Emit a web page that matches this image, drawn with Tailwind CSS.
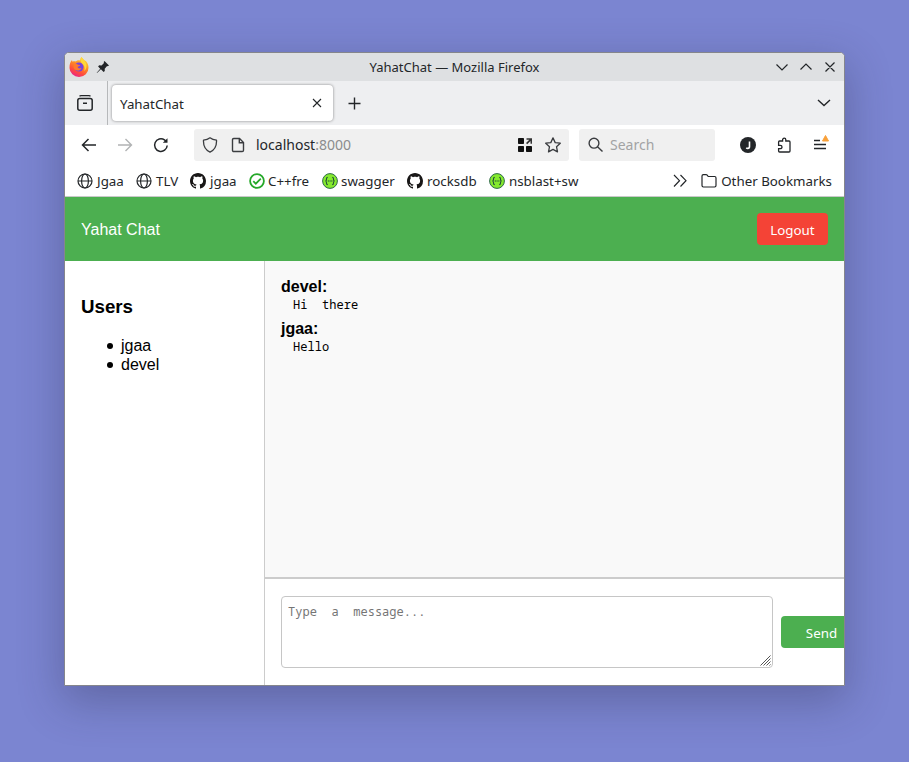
<!DOCTYPE html>
<html lang="en">
<head>
<meta charset="utf-8">
<title>YahatChat</title>
<script src="https://cdn.jsdelivr.net/npm/@tailwindcss/browser@4"></script>
</head>
<body class="w-[909px] h-[762px] overflow-hidden bg-[#7b85d1] pt-[52px] pl-[64px] font-['Noto_Sans',sans-serif] text-[#232629]">
<svg class="absolute w-0 h-0">
  <defs>
    <linearGradient id="fx" x1=".8" y1="0" x2=".3" y2="1"><stop offset="0" stop-color="#ffe83a"/><stop offset=".45" stop-color="#ff8a24"/><stop offset=".75" stop-color="#ff4a3f"/><stop offset="1" stop-color="#e8218d"/></linearGradient>
    <symbol id="globe" viewBox="0 0 16 16"><g fill="none" stroke="#232629" stroke-width="1.2"><circle cx="8" cy="8" r="7"/><ellipse cx="8" cy="8" rx="3.4" ry="7"/><path d="M1 8h14"/></g></symbol>
    <symbol id="github" viewBox="0 0 16 16"><path fill="#191717" d="M8 0C3.58 0 0 3.58 0 8c0 3.54 2.29 6.53 5.47 7.59.4.07.55-.17.55-.38 0-.19-.01-.82-.01-1.49-2.01.37-2.53-.49-2.69-.94-.09-.23-.48-.94-.82-1.13-.28-.15-.68-.52-.01-.53.63-.01 1.08.58 1.23.82.72 1.21 1.87.87 2.33.66.07-.52.28-.87.51-1.07-1.78-.2-3.64-.89-3.64-3.95 0-.87.31-1.59.82-2.15-.08-.2-.36-1.02.08-2.12 0 0 .67-.21 2.2.82.64-.18 1.32-.27 2-.27s1.36.09 2 .27c1.53-1.04 2.2-.82 2.2-.82.44 1.1.16 1.92.08 2.12.51.56.82 1.27.82 2.15 0 3.07-1.87 3.75-3.65 3.95.29.25.54.73.54 1.48 0 1.07-.01 1.93-.01 2.2 0 .21.15.46.55.38A8.01 8.01 0 0 0 16 8c0-4.42-3.58-8-8-8z"/></symbol>
    <symbol id="swagger" viewBox="0 0 16 16"><circle cx="8" cy="8" r="7.4" fill="#85ea2d" stroke="#2f6b4a"/><path d="M5.800 4.300c-1.300 0-1.300.5-1.300 1.700S4.300 8 3.400 8c.9 0 1.100.8 1.100 2s0 1.700 1.300 1.700M10.200 4.300c1.300 0 1.300.5 1.300 1.700s.2 2 1.100 2c-.9 0-1.100.8-1.100 2s0 1.700-1.300 1.700" fill="none" stroke="#1f4a3a" stroke-width="1.100"/><path d="M5.800 8h4.600" stroke="#1f4a3a" stroke-width="1.100" stroke-dasharray="1.200 .5"/></symbol>
  </defs>
</svg>
<div class="w-[781px] h-[634px] rounded-t-[5px] border border-[#85868c] bg-white overflow-hidden flex flex-col shadow-[0_14px_44px_2px_rgba(40,40,70,0.32)]">
  <!-- Title bar -->
  <header class="h-[28px] shrink-0 bg-[#dee0e2] flex items-center pl-[4px] pr-[8px]">
    <svg width="20" height="20" viewBox="0 0 20 20">
      <path d="M12.500 0c1 1.500 2.200 2.600 3.600 3.800.6-.1.900.2 1.200.7 1.500 1.800 2.300 4 2.200 6.300A9.500 9 0 0 1 .5 11C.4 7.500 1.300 4.500 3 2.900l.5 1.800c1.200-.5 2.300-.4 3.300-.2C8 3.300 9.500 3 11 3.400 11.200 2 11.700.8 12.500 0z" fill="url(#fx)"/>
      <circle cx="10" cy="10" r="4.500" fill="#7543e0"/>
      <path d="M5 7c1.500-.8 3-.2 4 .7l2.200.3c-.3 1.200-1.800 1.400-2.600 2 .3 1.600 2.400 1.900 4 .7-1 2.900-4.500 3.800-6.800 1.800C4.300 11.200 4.200 8.800 5 7z" fill="#ff7b2c"/>
      <path d="M12.500 0c1 2.300 4.700 4.500 5 8.500.2 2.300-.7 4.500-2.300 5.600 1-2.800.2-6-2-7.500C11.500 5.300 11 2 12.500 0z" fill="#ffd83a"/>
    </svg>
    <svg class="ml-[7px]" width="14" height="14" viewBox="0 0 14 14"><path d="M8.500 1 13 5.500l-1.200.8-.7-.2-2.400 2.700.1 2.200-1.200.9-2.700-2.700L1 13l-.3-.3L4.200 8.700 2.100 6.500 3.200 5.300l2.300.2L8 3.100l-.3-1z" fill="#232629"/></svg>
    <div class="flex-1 text-center text-[13px] leading-[28px] pl-[25px]">YahatChat — Mozilla Firefox</div>
    <svg width="62" height="14" viewBox="0 0 62 14" fill="none" stroke="#232629" stroke-width="1.200"><path d="M2.500 4.500 8 10l5.500-5.500M26.500 9.500 32 4l5.500 5.500M51.500 2.500l9 9M60.500 2.500l-9 9"/></svg>
  </header>
  <!-- Tab strip -->
  <div class="h-[44px] shrink-0 bg-[#eeeff1] flex items-center">
    <div class="w-[43px] h-full border-r border-[#b6b8ba] flex items-center pl-[12px]">
      <svg width="16" height="16" viewBox="0 0 16 16" fill="none" stroke="#232629" stroke-width="1.500"><path d="M2.500 1.200C3 .8 3.500.7 4 .7h8c.5 0 1 .1 1.500.5" stroke-width="1.300"/><rect x=".8" y="3.500" width="14.400" height="11.700" rx="2"/><path d="M6 8.300h4"/></svg>
    </div>
    <div class="ml-[4px] w-[221px] h-[36px] bg-white rounded-[4px] shadow-[0_0_3px_rgba(0,0,0,0.45)] flex items-center pl-[8px] pr-[11px] text-[13.333px]">
      <span class="flex-1 pt-[3px]">YahatChat</span>
      <svg width="10" height="10" viewBox="0 0 10 10" stroke="#232629" stroke-width="1.100"><path d="m1 1 8 8M9 1 1 9"/></svg>
    </div>
    <svg class="ml-[15px]" width="13" height="13" viewBox="0 0 13 13" stroke="#232629" stroke-width="1.400"><path d="M6.500.5v12M.5 6.500h12"/></svg>
    <svg class="ml-auto mr-[13px]" width="14" height="14" viewBox="0 0 14 14" fill="none" stroke="#232629" stroke-width="1.400"><path d="M1 4l6 5.500L13 4"/></svg>
  </div>
  <!-- Navigation toolbar -->
  <div class="h-[40px] shrink-0 flex items-center text-[14px]">
    <svg class="ml-[16px]" width="16" height="16" viewBox="0 0 16 16" fill="none" stroke="#232629" stroke-width="1.500"><path d="M15 8H1.500M7.500 2 1.500 8l6 6"/></svg>
    <svg class="ml-[20px]" width="16" height="16" viewBox="0 0 16 16" fill="none" stroke="#b1b3b4" stroke-width="1.400"><path d="M1 8h13.500M8.500 2l6 6-6 6"/></svg>
    <svg class="ml-[20px]" width="16" height="16" viewBox="0 0 16 16" fill="none" stroke="#232629" stroke-width="1.500"><path d="M14.200 8.500A6.300 6.300 0 1 1 11.500 2.900l1.800 1.600"/><path d="M14.500 1.200v4.600H9.800z" fill="#232629" stroke="none"/></svg>
    <div class="ml-[25px] w-[375px] h-[32px] rounded-[3px] bg-[#f0f0f0] flex items-center pl-[8px] pr-[8px]">
      <svg width="16" height="16" viewBox="0 0 16 16" fill="none" stroke="#3b3d40" stroke-width="1.300"><path d="M8 .8C6 2.400 3.800 3 1.500 3.200c-.3 5.200 1.300 9.600 6.500 12 5.200-2.400 6.800-6.800 6.500-12C12.200 3 10 2.400 8 .8z" stroke-linejoin="round"/></svg>
      <svg class="ml-[13px]" width="14" height="16" viewBox="0 0 14 16" fill="none" stroke="#3b3d40" stroke-width="1.400"><path d="M1.500 2.800c0-.8.500-1.300 1.300-1.300h5.700l4 4v7.700c0 .8-.5 1.300-1.300 1.300H2.800c-.8 0-1.300-.5-1.300-1.300z"/><path d="M8.300 1.500v4.200h4.200" /></svg>
      <span class="ml-[11px] flex-1 pb-[2px]">localhost<span class="text-[#8b8c8d]">:8000</span></span>
      <svg width="14" height="14" viewBox="0 0 14 14" fill="#111"><rect width="6" height="6" rx=".8"/><rect y="8" width="6" height="6" rx=".8"/><rect x="8" y="8" width="6" height="6" rx=".8"/><path d="M8.500.3H14v5.500h-1.500V3L9.200 6.300 8 5.100 11.300 1.800H8.500z" fill="#333"/></svg>
      <svg class="ml-[13px]" width="16" height="16" viewBox="0 0 16 16" fill="none" stroke="#3b3d40" stroke-width="1.300" stroke-linejoin="round"><path d="m8 .9 2.200 4.700 5.100.6-3.800 3.500 1 5.200L8 12.400l-4.500 2.500 1-5.200L.7 6.200l5.100-.6z"/></svg>
    </div>
    <div class="ml-[10px] w-[136px] h-[32px] rounded-[3px] bg-[#f0f0f0] flex items-center pl-[9px]">
      <svg width="16" height="16" viewBox="0 0 16 16" fill="none" stroke="#3b3d40" stroke-width="1.400"><circle cx="6" cy="6.200" r="4.900"/><path d="m9.500 9.700 5 4.800"/></svg>
      <span class="ml-[6px] pb-[2px] text-[#a2a3a4]">Search</span>
    </div>
    <svg class="ml-[25px]" width="16" height="16" viewBox="0 0 16 16"><circle cx="8" cy="8" r="8" fill="#232629"/><path d="M9.500 4.500v5c0 1.300-.6 1.900-1.700 1.900-.6 0-1.100-.1-1.600-.5" fill="none" stroke="#fff" stroke-width="1.600"/></svg>
    <svg class="ml-[20px]" width="16" height="16" viewBox="0 0 16 16" fill="none" stroke="#232629" stroke-width="1.300"><path d="M2 6.500V5c0-.6.400-1 1-1h3V2.800a1.600 1.600 0 0 1 3.200 0V4h3.200c.6 0 1 .4 1 1v9c0 .6-.4 1-1 1H3c-.6 0-1-.4-1-1v-2.300h1.700a1.700 1.700 0 0 0 0-3.400H2z" transform="translate(.6 0)"/></svg>
    <svg class="ml-[21px]" width="18" height="22" viewBox="0 0 18 22"><path d="M1 6.500h6M1 10.500h12M1 14.500h12" stroke="#232629" stroke-width="1.300" /><path d="M12.500 1.500 15.500 7H9.500z" fill="#f9a13a" stroke="#f9a13a" stroke-linejoin="round"/></svg>
  </div>
  <!-- Bookmarks -->
  <div class="h-[31px] shrink-0 flex items-center text-[13.333px] pl-[12px] pr-[12px] pt-px whitespace-nowrap">
    <div class="flex items-center gap-[4px] w-[59px]"><svg width="16" height="16"><use href="#globe"/></svg><span class="pt-[2px]">Jgaa</span></div>
    <div class="flex items-center gap-[4px] w-[54px]"><svg width="16" height="16"><use href="#globe"/></svg><span class="pt-[2px]">TLV</span></div>
    <div class="flex items-center gap-[4px] w-[59px]"><svg width="16" height="16"><use href="#github"/></svg><span class="pt-[2px]">jgaa</span></div>
    <div class="flex items-center gap-[3px] w-[73px]"><svg width="16" height="16" viewBox="0 0 16 16" fill="none" stroke="#25a829" stroke-width="1.800"><circle cx="8" cy="8" r="6.900"/><path d="m4.300 8.200 2.500 2.500 5-5"/></svg><span class="pt-[2px]">C++fre</span></div>
    <div class="flex items-center gap-[3px] w-[85px]"><svg width="16" height="16"><use href="#swagger"/></svg><span class="pt-[2px]">swagger</span></div>
    <div class="flex items-center gap-[4px] w-[82px]"><svg width="16" height="16"><use href="#github"/></svg><span class="pt-[2px]">rocksdb</span></div>
    <div class="flex items-center gap-[4px]"><svg width="16" height="16"><use href="#swagger"/></svg><span class="pt-[2px]">nsblast+sw</span></div>
    <svg class="ml-auto" width="14" height="14" viewBox="0 0 14 14" fill="none" stroke="#232629" stroke-width="1.200"><path d="m1 1 5.500 5.700L1 12.500M7.500 1 13 6.700l-5.500 5.800"/></svg>
    <svg class="ml-[14px] mr-[4px]" width="16" height="16" viewBox="0 0 16 16" fill="none" stroke="#232629" stroke-width="1.200"><path d="M1 3c0-.8.500-1.400 1.400-1.400H5c.5 0 .9.200 1.200.6l1 1.300h6.400c.8 0 1.400.6 1.400 1.400v7.700c0 .8-.6 1.400-1.400 1.400H2.400C1.500 14 1 13.400 1 12.600z"/></svg>
    <span class="pt-[2px]">Other Bookmarks</span>
  </div>
  <!-- Page -->
  <div class="h-[65px] shrink-0 border-t border-[#c9c9c9] bg-[#4caf50] flex items-center justify-between px-[16px] text-white font-['Liberation_Sans',Arial,sans-serif] text-[16px]">
    <span class="pt-[2px]">Yahat Chat</span>
    <button class="w-[71px] h-[32px] pt-[4px] rounded-[4px] bg-[#f44336] font-['Noto_Sans',sans-serif] text-[13.333px]">Logout</button>
  </div>
  <div class="flex-1 min-h-0 flex font-['Liberation_Sans',Arial,sans-serif] text-[16px] text-black">
    <aside class="w-[200px] shrink-0 border-r border-[#ccc] px-[16px] pt-[35px]">
      <h3 class="text-[18.720px] leading-[21px] font-bold">Users</h3>
      <ul class="mt-[19px] pl-[26px] leading-[19px]">
        <li class="flex items-center gap-[8px]"><i class="size-[6px] rounded-full bg-black"></i>jgaa</li>
        <li class="flex items-center gap-[8px]"><i class="size-[6px] rounded-full bg-black"></i>devel</li>
      </ul>
    </aside>
    <main class="flex-1 min-w-0 flex flex-col">
      <section class="h-[316px] shrink-0 bg-[#f9f9f9] px-[16px] pt-[16px]">
        <div class="h-[42px]"><div class="font-bold leading-[19px]">devel:</div><pre class="ml-[12px] font-['Noto_Sans_Mono','DejaVu_Sans_Mono',monospace] text-[12px] tracking-[0.04px] leading-[17px]">Hi  there</pre></div>
        <div class="h-[42px]"><div class="font-bold leading-[19px]">jgaa:</div><pre class="ml-[12px] font-['Noto_Sans_Mono','DejaVu_Sans_Mono',monospace] text-[12px] tracking-[0.04px] leading-[17px]">Hello</pre></div>
      </section>
      <section class="flex-1 border-t-2 border-[#ccc] flex items-start pt-[17px] pl-[16px]">
        <div class="w-[492px] h-[72px] shrink-0 rounded-[4px] border border-[#c6c6c6] pl-[6px] pt-[6px] pr-px pb-px flex justify-between">
          <pre class="font-['Noto_Sans_Mono','DejaVu_Sans_Mono',monospace] text-[12px] tracking-[0.04px] leading-[17px] text-[#757575]">Type  a  message...</pre>
          <svg class="self-end" width="11" height="11" viewBox="0 0 11 11" stroke="#555" stroke-width="1"><path d="M.5 10.500l10-10M3.500 10.500l7-7M6.500 10.500l4-4M9.500 10.500l1-1"/></svg>
        </div>
        <button class="ml-[8px] mt-[20px] w-[81px] h-[32px] pt-[4px] shrink-0 rounded-[4px] bg-[#4caf50] text-white font-['Noto_Sans',sans-serif] text-[13.333px]">Send</button>
      </section>
    </main>
  </div>
</div>
</body>
</html>
